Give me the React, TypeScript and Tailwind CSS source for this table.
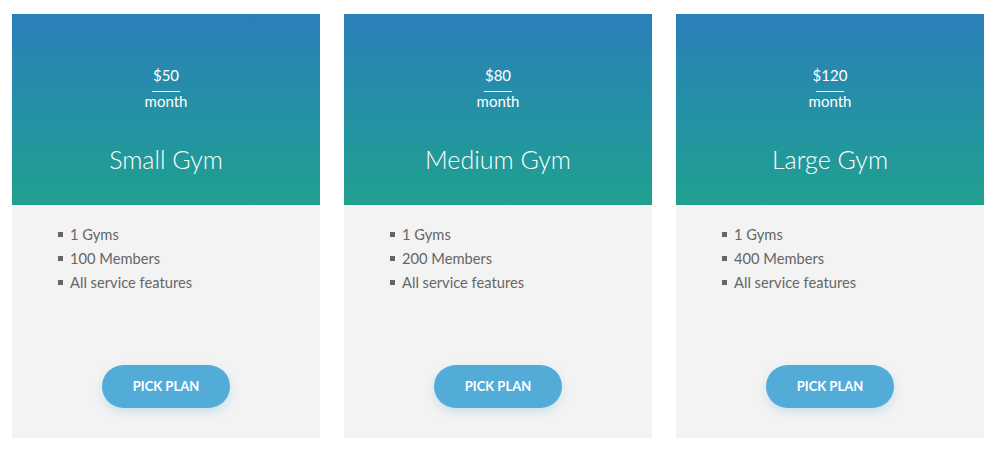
import React from "react";

const plans = [
  { price: "$50", name: "Small Gym", members: "100 Members" },
  { price: "$80", name: "Medium Gym", members: "200 Members" },
  { price: "$120", name: "Large Gym", members: "400 Members" },
];

export default function App() {
  return (
    <div className="w-[997px] h-[450px] bg-white" style={{ fontFamily: "Lato, 'Open Sans', sans-serif" }}>
      <div className="flex gap-6 pl-3 pt-[14px]">
        {plans.map((p) => (
          <div key={p.name} className="w-[308px] h-[424px] bg-[#f3f3f3] flex flex-col">
            <div className="h-[191px] bg-gradient-to-b from-[#2b7fb9] to-[#21a08f] flex flex-col items-center text-white">
              <div className="mt-[51px] text-[15px] leading-[20px]">{p.price}</div>
              <div className="w-[28px] h-px bg-white mt-[6px]" />
              <div className="text-[15px] leading-[18px]">month</div>
              <div className="mt-[34px] text-[25px] leading-[30px] font-light">{p.name}</div>
            </div>
            <ul className="pl-[46px] pt-[17px] text-[14.7px] leading-[24px] text-[#666]">
              {["1 Gyms", p.members, "All service features"].map((t) => (
                <li key={t} className="flex items-center">
                  <span className="w-[5px] h-[5px] bg-[#666] mr-[7px] mt-[1px]" />
                  {t}
                </li>
              ))}
            </ul>
            <div className="flex justify-center mt-[71px]">
              <button className="w-[128px] h-[43px] rounded-full bg-[#53acd8] text-white text-[13px] font-bold uppercase shadow-[0_4px_10px_rgba(83,172,216,0.25)]">
                Pick Plan
              </button>
            </div>
          </div>
        ))}
      </div>
    </div>
  );
}
